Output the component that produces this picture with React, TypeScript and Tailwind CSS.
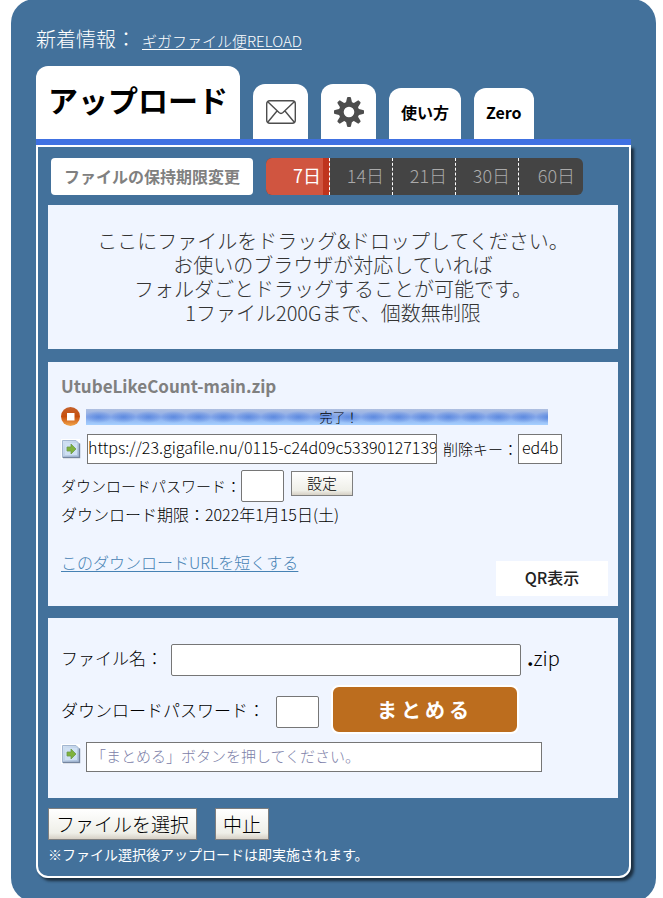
import React, { useState } from 'react';

const tabs = [
  { name: 'メール', icon: 'mail' },
  { name: '設定', icon: 'gear' },
];

const periods = ['7日', '14日', '21日', '30日', '60日'];

const fieldClass = 'border border-[#767676] bg-white text-black outline-none';
const grayButtonClass =
  'border border-[#7f7f7f] bg-linear-to-b from-white via-[#efefe8] via-80% to-[#d6d0c5] text-black';

function MailIcon() {
  return (
    <svg className="h-6 w-[30px]" viewBox="0 0 30 24" fill="none" stroke="#4d4d4d" strokeWidth="1.4">
      <rect x="0.7" y="0.7" width="28.6" height="22.6" rx="3" />
      <path d="M1.5 1.5 L13 12.6 Q15 14.4 17 12.6 L28.5 1.5 M1.5 22.5 L11 11 M28.5 22.5 L19 11" />
    </svg>
  );
}

function GearIcon() {
  const teeth = [0, 45, 90, 135, 180, 225, 270, 315];
  return (
    <svg className="h-[30px] w-[30px]" viewBox="0 0 30 30">
      <g fill="#4d4d4d">
        {teeth.map((angle) => (
          <path
            key={angle}
            d="M11.6 7 L13 1 Q13.1 0 14 0 H16 Q16.9 0 17 1 L18.4 7 Z"
            transform={`rotate(${angle} 15 15)`}
          />
        ))}
      </g>
      <circle cx="15" cy="15" r="7.8" fill="none" stroke="#4d4d4d" strokeWidth="5" />
    </svg>
  );
}

function StopIcon() {
  return (
    <svg className="h-5 w-5" viewBox="0 0 20 20">
      <defs>
        <linearGradient id="stop" x1="0" y1="0" x2="0" y2="1">
          <stop offset="0" stopColor="#c4622c" />
          <stop offset="0.5" stopColor="#c74e0c" />
          <stop offset="1" stopColor="#f3a64a" />
        </linearGradient>
      </defs>
      <circle cx="9.5" cy="9.5" r="9.5" fill="url(#stop)" />
      <rect x="6" y="6" width="7.5" height="7.5" fill="#fff" />
    </svg>
  );
}

function ArrowIcon() {
  return (
    <svg className="h-5 w-5" viewBox="0 0 20 20">
      <defs>
        <linearGradient id="sheet" x1="0" y1="0" x2="1" y2="1">
          <stop offset="0" stopColor="#d3e2f3" />
          <stop offset="1" stopColor="#a9bfdc" />
        </linearGradient>
      </defs>
      <rect width="19" height="20" fill="#fff" />
      <path d="M1.5 1.5 H15 L18.5 5 V18.5 H1.5 Z" fill="url(#sheet)" stroke="#a3b6d0" />
      <path d="M18.5 4.5 V18.5 H2" fill="none" stroke="#74859f" strokeWidth="1.4" />
      <rect x="4" y="4" width="12" height="12" fill="#cfe0f3" />
      <path d="M6 8 H10 V5 L15 10 L10 15 V12 H6 Z" fill="#7fb23c" stroke="#6c9a4a" strokeWidth="0.8" />
    </svg>
  );
}

export default function App() {
  const [period, setPeriod] = useState('7日');

  return (
    <div className="bg-white font-['Noto_Sans_CJK_JP','Noto_Sans',sans-serif] font-light text-black">
      <div className="-mt-px mr-[7px] ml-[11px] rounded-3xl bg-[#43719b] px-[25px] pt-6 pb-6">
        <div className="flex h-8 items-baseline gap-1.5 text-white">
          <span className="text-xl leading-8">新着情報：</span>
          <a href="#news" className="text-[15px] underline underline-offset-2">ギガファイル便RELOAD</a>
        </div>

        {/* Tabs */}
        <nav className="mt-[11px] flex items-end gap-[13px] border-b-6 border-[#4071e2] font-bold">
          <a href="#upload" className="flex h-[73px] items-center rounded-t-xl bg-white px-3 pb-2 text-3xl">
            アップロード
          </a>
          {tabs.map((tab) => (
            <a
              key={tab.name}
              href={`#${tab.icon}`}
              aria-label={tab.name}
              className="flex h-[55px] w-[55px] items-center justify-center rounded-t-xl bg-white"
            >
              {tab.icon === 'mail' ? <MailIcon /> : <GearIcon />}
            </a>
          ))}
          <a href="#howto" className="flex h-[51px] items-center rounded-t-xl bg-white px-3 pb-1 text-base">使い方</a>
          <a href="#zero" className="flex h-[51px] items-center rounded-t-xl bg-white px-3 pb-1 text-base">Zero</a>
        </nav>

        <main className="rounded-b-xl border-2 border-white pt-[11px] pr-[11px] pb-3 pl-2.5 shadow-[3px_3px_3px_rgba(0,0,0,0.6)]">
          <div className="flex items-center gap-[13px] pl-[3px]">
            <button className="h-[37px] rounded-sm bg-white px-[13px] pb-0.5 text-base font-bold text-[#808080]">
              ファイルの保持期限変更
            </button>
            <div className="flex h-[37px] overflow-hidden rounded-md bg-[#444444] text-lg">
              {periods.map((name) => (
                <button
                  key={name}
                  onClick={() => setPeriod(name)}
                  className={
                    'w-[63px] border-dashed border-white pr-2 pb-1 text-right first:w-16 last:w-16 not-last:border-r ' +
                    (name === period
                      ? 'bg-linear-to-r from-[#d05540] from-90% to-[#bf341d] to-90% font-normal text-white'
                      : 'text-[#aaaaaa]')
                  }
                >
                  {name}
                </button>
              ))}
            </div>
          </div>

          {/* Drop area */}
          <div className="mt-2.5 bg-[#f0f5ff] py-6 text-center text-xl leading-6 text-[#333333]">
            ここにファイルをドラッグ&amp;ドロップしてください。<br />
            お使いのブラウザが対応していれば<br />
            フォルダごとドラッグすることが可能です。<br />
            1ファイル200Gまで、個数無制限
          </div>

          {/* Uploaded file */}
          <section className="mt-[13px] bg-[#f0f5ff] px-[13px] py-2.5">
            <h2 className="text-[17px] leading-7 font-bold text-[#808080]">UtubeLikeCount-main.zip</h2>
            <div className="mt-[7px] flex items-center gap-[5px]">
              <button aria-label="中止"><StopIcon /></button>
              <div className="h-4 w-[462px] bg-[radial-gradient(ellipse_14px_6px_at_center,#5f8be0,transparent),linear-gradient(#b0c0e0,#86a8ea,#a6d0ff)] bg-size-[25px_100%] pl-11 text-center">
                <span className="block text-[13px] leading-4">完了！</span>
              </div>
            </div>
            <div className="mt-[7px] flex items-center text-[15px]">
              <button aria-label="コピー"><ArrowIcon /></button>
              <input
                aria-label="ダウンロードURL"
                readOnly
                defaultValue="https://23.gigafile.nu/0115-c24d09c53390127139a"
                className={`${fieldClass} ml-1.5 h-[30px] w-[350px] pb-1 text-base`}
              />
              <label htmlFor="delkey" className="ml-1.5">削除キー：</label>
              <input id="delkey" readOnly defaultValue="ed4b" className={`${fieldClass} h-[30px] w-11 px-[3px] pb-1 text-base`} />
            </div>
            <div className="mt-1.5 flex items-center text-[15px]">
              <label htmlFor="dlpass">ダウンロードパスワード：</label>
              <input id="dlpass" className={`${fieldClass} h-8 w-[43px] rounded-xs`} />
              <button className={`${grayButtonClass} mt-px ml-[7px] h-[25px] w-[62px] self-start`}>設定</button>
            </div>
            <p className="text-base leading-6">ダウンロード期限：2022年1月15日(土)</p>
            <div className="mt-6 flex items-start justify-between">
              <a href="#short" className="text-base leading-6 text-[#4682b4] underline underline-offset-2">
                このダウンロードURLを短くする
              </a>
              <button className="-mr-[3px] mt-[11px] h-[35px] w-28 bg-white pb-1 text-base font-medium text-[#222222]">QR表示</button>
            </div>
          </section>

          {/* Bundle form */}
          <section className="mt-3 bg-[#f0f5ff] px-[13px] py-[26px] text-[17px]">
            <div className="flex items-center">
              <label htmlFor="zipname" className="pb-1">ファイル名：</label>
              <input id="zipname" className={`${fieldClass} ml-2 h-8 w-[350px] rounded-xs`} />
              <span className="ml-1.5 pb-1 text-xl"><span className="font-bold">.</span>zip</span>
            </div>
            <div className="mt-[9px] flex items-center">
              <label htmlFor="zippass">ダウンロードパスワード：</label>
              <input id="zippass" className={`${fieldClass} mt-1 ml-[11px] h-8 w-[43px] rounded-xs`} />
              <button className="ml-3 h-[49px] w-[188px] rounded-lg border-2 border-white bg-[#bc6d1e] text-xl font-bold tracking-[0.2em] text-white">
                まとめる
              </button>
            </div>
            <div className="mt-2 flex items-start gap-[5px]">
              <button aria-label="コピー" className="mt-0.5"><ArrowIcon /></button>
              <input
                aria-label="まとめURL"
                readOnly
                placeholder="「まとめる」ボタンを押してください。"
                className={`${fieldClass} h-[30px] w-[456px] px-1 pb-1 text-[15px] placeholder:text-[#7c80a8]`}
              />
            </div>
          </section>

          <div className="mt-2.5 flex gap-[18px]">
            <button className={`${grayButtonClass} h-8 px-[7px] text-[19px] leading-7`}>ファイルを選択</button>
            <button className={`${grayButtonClass} h-8 px-[7px] text-[19px] leading-7`}>中止</button>
          </div>
          <p className="mt-1 text-sm leading-5 font-normal text-white">※ファイル選択後アップロードは即実施されます。</p>
        </main>
      </div>
    </div>
  );
}
